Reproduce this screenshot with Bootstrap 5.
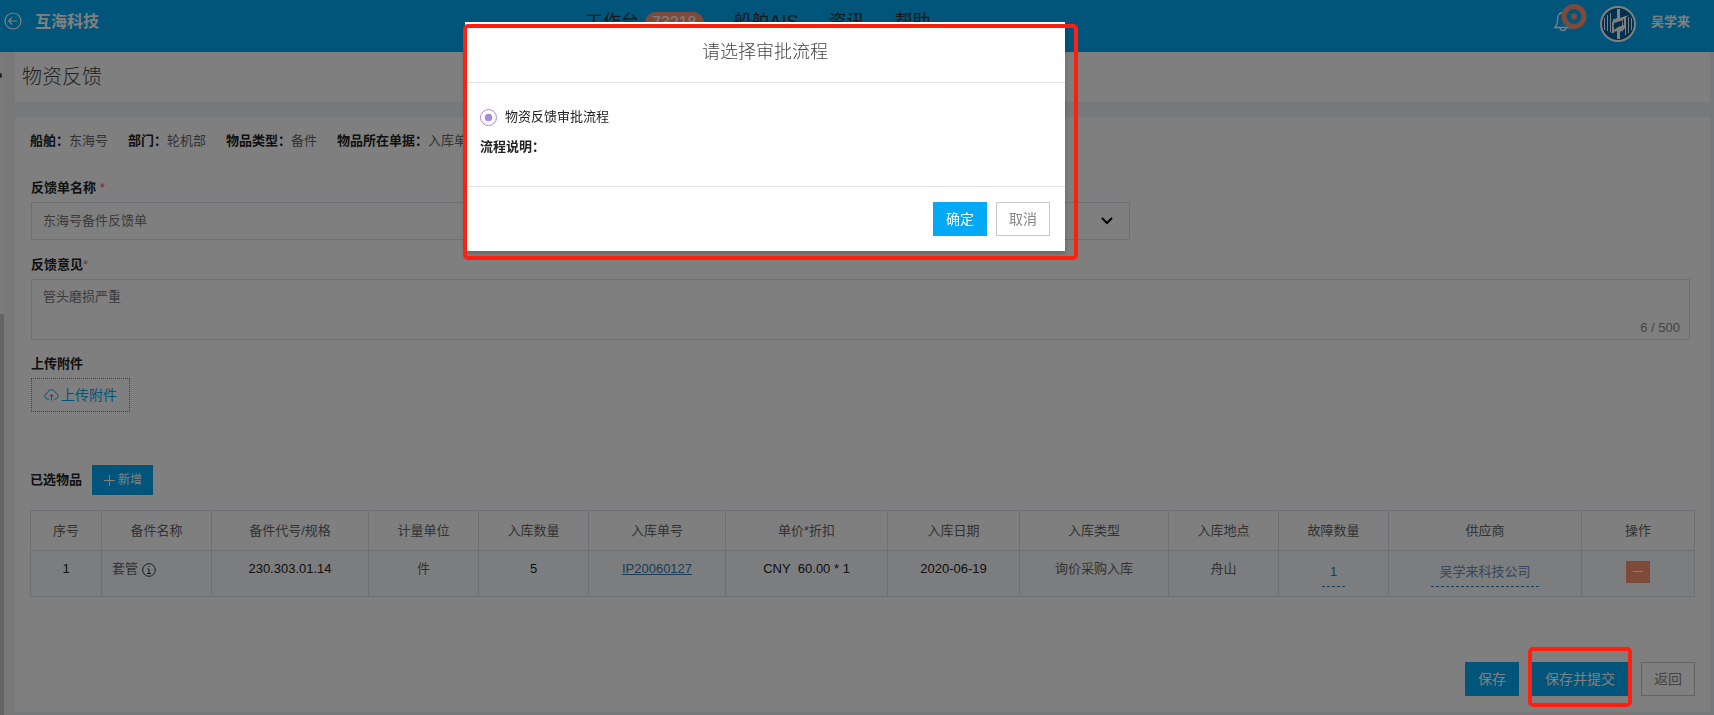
<!DOCTYPE html>
<html lang="zh-CN">
<head>
<meta charset="utf-8">
<meta name="viewport" content="width=device-width, initial-scale=1">
<title>物资反馈 - 互海科技</title>
<link href="https://cdn.jsdelivr.net/npm/bootstrap@5.3.0/dist/css/bootstrap.min.css" rel="stylesheet">
<style>
:root { --brand: #03a9f4; --mark-red: #ff2010; --line: #dde1e6; }
body {
  font-family: "Liberation Sans", "Noto Sans CJK SC", sans-serif;
  font-size: 13px; line-height: 20px; color: #666; background: #edf0f5; min-height: 100vh;
}
.btn, .form-control, .form-select { font-size: 13px; line-height: 20px; border-radius: 0; color: #777; }
.btn { font-size: 14px; padding: 6px 12px; white-space: nowrap; }
.btn-brand, .btn-brand:hover { background: var(--brand); border-color: var(--brand); color: #fff; }
.btn-plain { background: #fff; border-color: #c8c8c8; color: #888; }

/* top bar */
.topbar { height: 52px; background: var(--brand); color: #fff; }
.topbar a { color: inherit; text-decoration: none; }
.brand-area { flex: 0 0 585px; padding: 12px 0 0 4px; gap: 13px; }
.brand-name { font-size: 16px; font-weight: 700; }
.main-links { font-size: 18px; gap: 30px; }
.main-links a { color: #333; }
.count-pill { background: #ff9575; color: #fff; font-size: 16px; border-radius: 11px; padding: 0 7px; line-height: 22px; margin-left: 6px; }
.user-area { padding-right: 24px; gap: 13px; }
.bell { width: 34px; height: 34px; }
.avatar { margin: 6px 15px 0 0; }
.user-name { margin-top: 12px; font-weight: 700; }

/* page */
.side-strip { flex: 0 0 5px; background: #f5f5f5; }
.side-scroll { width: 4px; margin-top: 262px; background: #c9c9c9; flex: 1; }
.side-mark { width: 2px; height: 5px; top: 21px; left: 0; background: #444; border-radius: 0 3px 3px 0; }
.workarea { padding: 0 4px 0 10px; min-height: calc(100vh - 52px); }
.title-panel { background: #fff; padding: 10px 7px; margin-bottom: 15px; }
.title-panel h1 { font-size: 20px; line-height: 30px; font-weight: 300; color: #444; margin: 0; }
.form-panel { background: #fff; padding: 14px 15px 16px; }
.facts { gap: 20px; margin-bottom: 27px; }
.facts dt, .field-title { font-weight: 700; color: #222; }
.field-title { display: block; margin-bottom: 4px; }
.required { color: #f0625a; font-weight: 400; }
.form-fields { padding: 0 5px 0 1px; }
.form-control { padding: 8px 11px; border-color: var(--line); }
.form-select {
  height: 38px; border-color: var(--line); background-size: 16px 16px; background-position: right 14px center;
  background-image: url("data:image/svg+xml,%3csvg xmlns='http://www.w3.org/2000/svg' viewBox='0 0 16 16'%3e%3cpath fill='none' stroke='black' stroke-width='2' d='m3 5 5 5 5-5'/%3e%3c/svg%3e");
}
textarea.form-control { height: 61px; resize: none; display: block; padding-top: 7px; }
.counter { right: 10px; bottom: 2px; color: #888; }
.field-gap { margin-top: 15px; }
.upload-gap { margin-top: 14px; }
.btn-upload { border: 1px dotted var(--brand); color: var(--brand); height: 34px; gap: 2px; }
.items-head { margin: 53px 0 15px; gap: 10px; }
.btn-add { font-size: 12px; line-height: 18px; padding: 5px 10px; gap: 2px; }

/* items table */
.items-table { table-layout: fixed; margin: 0; color: #222; border-color: var(--line); text-align: center; --bs-table-bg: transparent; }
.items-table th { font-weight: 400; color: #666; padding: 10px 4px 9px; height: 40px; }
.items-table td { background: #f8fafd; padding: 8px 4px 7px; height: 46px; white-space: nowrap; }
.items-table .item-name { text-align: left; padding-left: 10px; }
.items-table .soft { color: #666; }
.items-table a { color: #337ab7; }
.items-table .editable { display: inline-block; text-decoration: none; border-bottom: 1px dashed #337ab7; padding: 3px 8px 4px; }
.items-table .supplier { color: #6f8fb8; }
.btn-remove { background: #ff9575; border: 0; width: 24px; height: 22px; padding: 0; display: inline-flex; justify-content: center; align-items: center; margin-top: 2px; }
.actions { margin-top: 65px; gap: 13px; }
.mark-box { position: absolute; border: 4px solid var(--mark-red); border-radius: 5px; z-index: 1070; pointer-events: none; }
.mark-submit { inset: -15px -4px -11px; }

/* dialog */
.modal { padding-right: 184px; }
.modal-dialog { width: 600px; max-width: none; margin: 22px auto; }
.modal-content { border: 0; border-radius: 0; box-shadow: 0 3px 6px rgba(0,0,0,.2); }
.modal-header { padding: 15px; height: 61px; border-color: #e5e5e5; border-radius: 0; justify-content: center; }
.modal-title { font-size: 18px; line-height: 30px; font-weight: 300; color: #444; }
.modal-body { padding: 24px 15px; height: 103px; color: #222; }
.flow-option { gap: 8px; margin-bottom: 10px; }
.modal-footer { padding: 15px; height: 65px; gap: 9px; align-items: flex-start; border-color: #e5e5e5; border-radius: 0; }
.modal-footer .btn { margin: 0; }
.form-check-input { width: 17px; height: 17px; margin: 0; border-color: #a98ae0; }
.form-check-input:checked {
  background-color: #fff; border-color: #a98ae0;
  background-image: url("data:image/svg+xml,%3csvg xmlns='http://www.w3.org/2000/svg' viewBox='-8 -8 16 16'%3e%3ccircle r='4' fill='%23a98ae0'/%3e%3c/svg%3e");
}
.mark-dialog { inset: 2px -13px -9px -2px; }
</style>
</head>
<body class="d-flex flex-column">
<header class="topbar d-flex">
  <div class="brand-area d-flex align-items-start">
    <a href="#" aria-label="返回" class="d-flex">
      <svg width="18" height="18" viewBox="0 0 18 18" fill="none" stroke="#fff" stroke-width="1.2"><circle cx="9" cy="9" r="8"/><path d="M13.500 9H5M8 5.500 4.700 9 8 12.500"/></svg>
    </a>
    <a href="#" class="brand-name">互海科技</a>
  </div>
  <nav class="main-links d-flex align-items-start text-nowrap pt-2">
    <a href="#" class="d-flex"><span class="pt-1">工作台</span><span class="count-pill mt-1">73218</span></a>
    <a href="#" class="pt-1">船舶AIS</a>
    <a href="#" class="pt-1">资讯</a>
    <a href="#" class="pt-1">帮助</a>
  </nav>
  <div class="user-area d-flex ms-auto align-items-start">
    <a href="#" aria-label="通知">
      <svg class="bell" viewBox="0 0 34 34" fill="none"><path d="M2 27.500h16c-2-2-2.500-3.500-2.500-7 0-5-1.500-8-5.500-8s-5.500 3-5.500 8c0 3.500-.5 5-2.500 7zM7 28c.5 3.500 5.500 3.500 6 0" stroke="#fff" stroke-width="1.300"/><circle cx="21" cy="16.500" r="10" fill="#03a9f4" stroke="#ff9575" stroke-width="5"/><circle cx="21" cy="16.500" r="3" fill="#ff9575"/></svg>
    </a>
    <a href="#" class="d-flex">
      <svg class="avatar" width="36" height="36" viewBox="0 0 36 36"><circle cx="18" cy="18" r="17" fill="#00609e" stroke="#fff" stroke-width="2"/><g stroke="#fff" stroke-width="1" fill="none"><path d="M4.500 12v12M7.500 9v16M10.500 7v19M13.500 13v10M22.500 14v11M25.500 11v18M28.500 11v16M31.500 12v12"/></g><path d="M17 3h3v9l9-3-8 6-7 2v10h-2v-8c0-4 2-6 5-7zM20 33h-3v-8l-7 2 8-6 6-2v-9l2 1v7c0 4-2 6-6 8z" fill="#fff"/><path d="M13 21c2-4 6-6 10-6-2 4-6 6-10 6z" fill="#00609e"/></svg>
      <span class="user-name">吴学来</span>
    </a>
  </div>
</header>

<div class="d-flex flex-grow-1">
  <aside class="side-strip d-flex flex-column position-relative"><span class="side-mark position-absolute"></span><div class="side-scroll"></div></aside>
  <main class="workarea flex-grow-1">
    <section class="title-panel"><h1>物资反馈</h1></section>
    <section class="form-panel">
      <dl class="facts d-flex text-nowrap">
        <div class="d-flex"><dt>船舶：</dt><dd class="m-0">东海号</dd></div>
        <div class="d-flex"><dt>部门：</dt><dd class="m-0">轮机部</dd></div>
        <div class="d-flex"><dt>物品类型：</dt><dd class="m-0">备件</dd></div>
        <div class="d-flex"><dt>物品所在单据：</dt><dd class="m-0">入库单</dd></div>
      </dl>
      <form class="form-fields">
        <div class="row align-items-end" style="--bs-gutter-x:20px">
          <div class="col-4">
            <label class="field-title" for="sheetName">反馈单名称 <span class="required">*</span></label>
            <input id="sheetName" class="form-control" type="text" value="东海号备件反馈单">
          </div>
          <div class="col-4"><select class="form-select" aria-label="反馈类型"><option></option></select></div>
        </div>
        <div class="field-gap">
          <label class="field-title" for="opinion">反馈意见<span class="required">*</span></label>
          <div class="position-relative">
            <textarea id="opinion" class="form-control" maxlength="500">管头磨损严重</textarea>
            <span class="counter position-absolute">6 / 500</span>
          </div>
        </div>
        <div class="upload-gap">
          <span class="field-title">上传附件</span>
          <button type="button" class="btn btn-upload d-flex align-items-center">
            <svg width="15" height="14" viewBox="0 0 16 14" fill="none" stroke="currentColor"><path d="M5.500 11.500H4a3.300 3.300 0 0 1-.5-6.500 4.600 4.600 0 0 1 9 0 3.300 3.300 0 0 1-.5 6.500h-1.500M8 13V6.500M5.700 8.700 8 6.400l2.300 2.300"/></svg>上传附件
          </button>
        </div>
      </form>
      <div class="items-head d-flex align-items-center">
        <span class="field-title mb-0">已选物品</span>
        <button type="button" class="btn btn-brand btn-add d-flex align-items-center"><svg width="13" height="13" viewBox="0 0 13 13" stroke="#fff"><path d="M6.500 1v11M1 6.500h11"/></svg>新增</button>
      </div>
      <table class="table table-bordered items-table">
        <colgroup><col style="width:71px"><col style="width:110px"><col style="width:157px"><col style="width:110px"><col style="width:110px"><col style="width:137px"><col style="width:162px"><col style="width:132px"><col style="width:149px"><col style="width:110px"><col style="width:110px"><col style="width:193px"><col style="width:113px"></colgroup>
        <thead><tr><th>序号</th><th>备件名称</th><th>备件代号/规格</th><th>计量单位</th><th>入库数量</th><th>入库单号</th><th>单价*折扣</th><th>入库日期</th><th>入库类型</th><th>入库地点</th><th>故障数量</th><th>供应商</th><th>操作</th></tr></thead>
        <tbody><tr>
          <td>1</td>
          <td class="item-name soft">套管 <svg width="14" height="14" viewBox="0 0 14 14" fill="none" stroke="#333"><circle cx="7" cy="7" r="6.300"/><path d="M5.500 6H7v4.500M5 10.500h4M6.500 3.500h1"/></svg></td>
          <td>230.303.01.14</td>
          <td class="soft">件</td>
          <td>5</td>
          <td><a href="#">IP20060127</a></td>
          <td>CNY&nbsp; 60.00 * 1</td>
          <td>2020-06-19</td>
          <td class="soft">询价采购入库</td>
          <td class="soft">舟山</td>
          <td><a href="#" class="editable">1</a></td>
          <td><a href="#" class="editable supplier">吴学来科技公司</a></td>
          <td><button type="button" class="btn btn-remove" aria-label="移除"><svg width="10" height="5" viewBox="0 0 10 5" stroke="#fff"><path d="M0 1.500h10"/></svg></button></td>
        </tr></tbody>
      </table>
      <div class="actions d-flex justify-content-end">
        <button type="button" class="btn btn-brand">保存</button>
        <div class="position-relative"><button type="button" class="btn btn-brand">保存并提交</button><span class="mark-box mark-submit"></span></div>
        <button type="button" class="btn btn-plain">返回</button>
      </div>
    </section>
  </main>
</div>

<div class="modal-backdrop show"></div>
<div class="modal d-block" role="dialog" aria-modal="true" aria-labelledby="flowTitle">
  <div class="modal-dialog">
    <div class="modal-content">
      <div class="modal-header"><h2 class="modal-title" id="flowTitle">请选择审批流程</h2></div>
      <div class="modal-body">
        <div class="flow-option d-flex align-items-center"><input class="form-check-input" type="radio" name="flow" id="flow1" checked><label for="flow1">物资反馈审批流程</label></div>
        <div class="fw-bold">流程说明：</div>
      </div>
      <div class="modal-footer"><button type="button" class="btn btn-brand">确定</button><button type="button" class="btn btn-plain">取消</button></div>
    </div>
    <span class="mark-box mark-dialog"></span>
  </div>
</div>
<script src="https://cdn.jsdelivr.net/npm/bootstrap@5.3.0/dist/js/bootstrap.bundle.min.js"></script>
</body>
</html>
